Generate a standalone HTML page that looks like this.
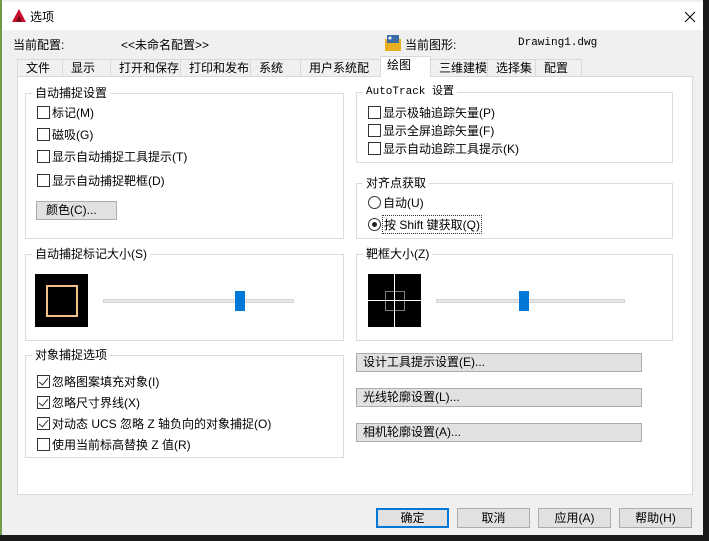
<!DOCTYPE html>
<html><head><meta charset="utf-8"><style>
*{box-sizing:border-box;margin:0;padding:0}
body{width:709px;height:541px;background:#1a1a1a;position:relative;overflow:hidden;font-family:"Liberation Sans","Noto Sans CJK SC",sans-serif;font-size:12px;color:#000}
.a{position:absolute;white-space:nowrap}
#win{position:absolute;left:0;top:0;width:703px;height:535px;background:#f0f0f0;border-left:2px solid #6e9a4a}
#title{position:absolute;left:0;top:2px;width:701px;height:28px;background:#fff}
.panel{position:absolute;left:15px;top:76px;width:676px;height:419px;background:#fff;border:1px solid #d9d9d9}
.tab{position:absolute;top:59px;height:18px;border:1px solid #d9d9d9;border-bottom:none;background:#f0f0f0;padding-left:8px;line-height:16px;font-size:12px}
.grp{position:absolute;border:1px solid #dcdcdc}
.gt{position:absolute;top:-9px;left:6px;background:#fff;padding:0 3px;line-height:16px}
.cb{position:absolute;width:13px;height:13px;border:1px solid #333;background:#fff}
.ck:after{content:"";position:absolute;left:3px;top:0px;width:4px;height:8px;border:solid #333;border-width:0 1.5px 1.5px 0;transform:rotate(40deg)}
.rb{position:absolute;width:13px;height:13px;border:1px solid #333;border-radius:50%;background:#fff}
.btn{position:absolute;background:#e1e1e1;border:1px solid #adadad;line-height:16px;padding-left:6px}
.track{position:absolute;height:4px;background:#e7e7e7;border:1px solid #d6d6d6}
.thumb{position:absolute;width:10px;height:20px;background:#0078d7}
</style></head><body>
<div id="win">
<div id="title">
<svg class="a" style="left:10px;top:7px" width="14" height="13"><polygon points="7,0 14,13 0,13" fill="#c8102e"/><polygon points="7,6 10,13 4,13" fill="#7a0a1a"/></svg>
<div class="a" style="left:28px;top:6px;font-size:12px">选项</div>
<svg class="a" style="left:682px;top:9px" width="12" height="12"><path d="M1 1L11 11M11 1L1 11" stroke="#000" stroke-width="1"/></svg>
</div>
<div class="a" style="left:11px;top:36px">当前配置:</div>
<div class="a" style="left:119px;top:36px">&lt;&lt;未命名配置&gt;&gt;</div>
<svg class="a" style="left:383px;top:35px" width="16" height="16"><rect x="0" y="4" width="16" height="12" fill="#e8b020"/><rect x="2" y="0" width="12" height="8" fill="#3a6ea5"/><circle cx="5" cy="3" r="1.5" fill="#fff"/></svg>
<div class="a" style="left:403px;top:36px">当前图形:</div>
<div class="a" style="left:516px;top:37px;font-family:'Liberation Mono',monospace;font-size:11px">Drawing1.dwg</div>

<div class="tab" style="left:15px;width:46px">文件</div>
<div class="tab" style="left:60px;width:49px">显示</div>
<div class="tab" style="left:108px;width:71px">打开和保存</div>
<div class="tab" style="left:178px;width:71px">打印和发布</div>
<div class="tab" style="left:248px;width:51px">系统</div>
<div class="tab" style="left:298px;width:81px">用户系统配置</div>
<div class="tab" style="left:428px;width:58px">三维建模</div>
<div class="tab" style="left:485px;width:49px">选择集</div>
<div class="tab" style="left:533px;width:47px">配置</div>
<div class="panel"></div>
<div class="tab" style="left:378px;top:56px;height:21px;width:51px;background:#fff;z-index:2;padding-left:6px">绘图</div>

<div class="grp" style="left:23px;top:93px;width:319px;height:146px"><div class="gt">自动捕捉设置</div></div>
<div class="cb" style="left:35px;top:106px"></div><div class="a" style="left:50px;top:104px">标记(M)</div>
<div class="cb" style="left:35px;top:128px"></div><div class="a" style="left:50px;top:126px">磁吸(G)</div>
<div class="cb" style="left:35px;top:150px"></div><div class="a" style="left:50px;top:148px">显示自动捕捉工具提示(T)</div>
<div class="cb" style="left:35px;top:174px"></div><div class="a" style="left:50px;top:172px">显示自动捕捉靶框(D)</div>
<div class="btn" style="left:34px;top:201px;width:81px;height:19px;padding-left:9px">颜色(C)...</div>

<div class="grp" style="left:23px;top:254px;width:319px;height:87px"><div class="gt">自动捕捉标记大小(S)</div></div>
<div class="a" style="left:33px;top:274px;width:53px;height:53px;background:#000"></div>
<div class="a" style="left:44px;top:285px;width:32px;height:32px;border:2px solid #f5c08a"></div>
<div class="track" style="left:101px;top:299px;width:191px"></div>
<div class="thumb" style="left:233px;top:291px"></div>

<div class="grp" style="left:23px;top:355px;width:319px;height:103px"><div class="gt">对象捕捉选项</div></div>
<div class="cb ck" style="left:35px;top:375px"></div><div class="a" style="left:50px;top:373px">忽略图案填充对象(I)</div>
<div class="cb ck" style="left:35px;top:396px"></div><div class="a" style="left:50px;top:394px">忽略尺寸界线(X)</div>
<div class="cb ck" style="left:35px;top:417px"></div><div class="a" style="left:50px;top:415px">对动态 UCS 忽略 Z 轴负向的对象捕捉(O)</div>
<div class="cb" style="left:35px;top:438px"></div><div class="a" style="left:50px;top:436px">使用当前标高替换 Z 值(R)</div>

<div class="grp" style="left:354px;top:92px;width:317px;height:71px"><div class="gt" style="font-family:'Liberation Mono','Noto Sans CJK SC',monospace;font-size:11px">AutoTrack 设置</div></div>
<div class="cb" style="left:366px;top:106px"></div><div class="a" style="left:381px;top:104px">显示极轴追踪矢量(P)</div>
<div class="cb" style="left:366px;top:124px"></div><div class="a" style="left:381px;top:122px">显示全屏追踪矢量(F)</div>
<div class="cb" style="left:366px;top:142px"></div><div class="a" style="left:381px;top:140px">显示自动追踪工具提示(K)</div>

<div class="grp" style="left:354px;top:183px;width:317px;height:56px"><div class="gt">对齐点获取</div></div>
<div class="rb" style="left:366px;top:196px"></div><div class="a" style="left:381px;top:194px">自动(U)</div>
<div class="rb" style="left:366px;top:218px"></div><div class="a" style="left:370px;top:222px;width:5px;height:5px;border-radius:50%;background:#222"></div>
<div class="a" style="left:380px;top:215px;border:1px dotted #333;padding:0 1px">按 Shift 键获取(Q)</div>

<div class="grp" style="left:354px;top:254px;width:317px;height:87px"><div class="gt">靶框大小(Z)</div></div>
<svg class="a" style="left:366px;top:274px" width="53" height="53"><rect width="53" height="53" fill="#000"/><line x1="26.5" y1="0" x2="26.5" y2="53" stroke="#fff"/><line x1="0" y1="26.5" x2="53" y2="26.5" stroke="#fff"/><rect x="17.5" y="17.5" width="19" height="19" fill="none" stroke="#fff" stroke-dasharray="1,1"/></svg>
<div class="track" style="left:434px;top:299px;width:189px"></div>
<div class="thumb" style="left:517px;top:291px"></div>

<div class="btn" style="left:354px;top:353px;width:286px;height:19px">设计工具提示设置(E)...</div>
<div class="btn" style="left:354px;top:388px;width:286px;height:19px">光线轮廓设置(L)...</div>
<div class="btn" style="left:354px;top:423px;width:286px;height:19px">相机轮廓设置(A)...</div>

<div class="btn" style="left:374px;top:508px;width:73px;height:20px;border:2px solid #0078d7;text-align:center;padding:0;line-height:16px">确定</div>
<div class="btn" style="left:455px;top:508px;width:73px;height:20px;text-align:center;padding:0;line-height:18px">取消</div>
<div class="btn" style="left:536px;top:508px;width:73px;height:20px;text-align:center;padding:0;line-height:18px">应用(A)</div>
<div class="btn" style="left:617px;top:508px;width:73px;height:20px;text-align:center;padding:0;line-height:18px">帮助(H)</div>
</div>
</body></html>
